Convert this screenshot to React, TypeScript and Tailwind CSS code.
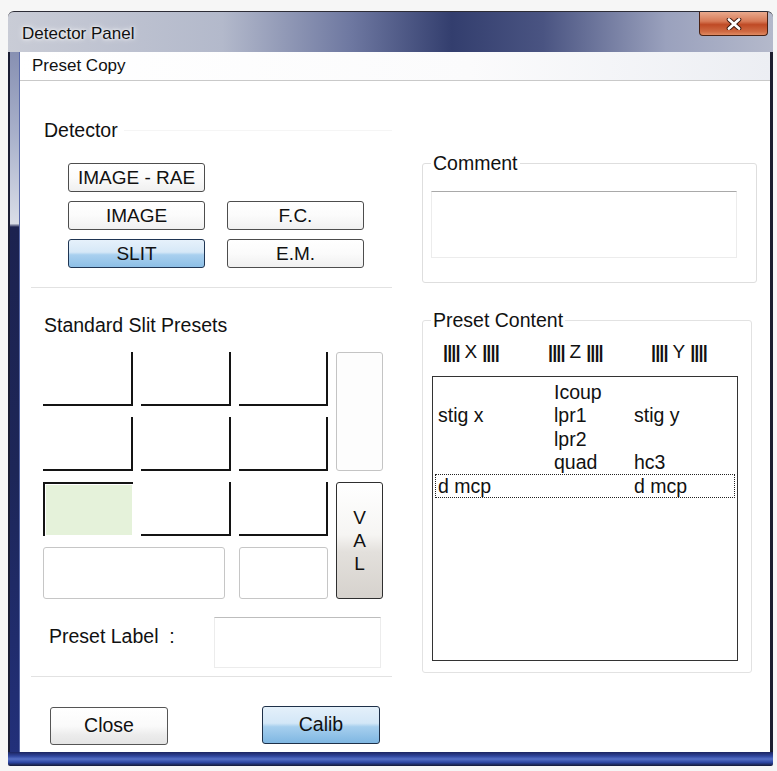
const sans = "font-['Liberation_Sans',Arial,sans-serif]";

const DetectorButton = ({ label, active = false }: { label: string; active?: boolean }) => (
  <button
    className={
      active
        ? 'h-[29px] w-[137px] rounded-[3px] border border-[#1f3553] bg-[linear-gradient(to_bottom,#e6f1fb_0%,#d6e8f7_45%,#a9d0ef_55%,#8dbfe6_100%)] text-[19px] leading-none'
        : 'h-[29px] w-[137px] rounded-[3px] border border-[#4d4d4d] bg-[linear-gradient(to_bottom,#ffffff_0%,#fbfbfb_50%,#f0f0f0_100%)] text-[19px] leading-none'
    }
  >
    {label}
  </button>
);

// slit cell: open on the top/left, dark edge on the right and bottom
const SlitCell = () => <div className="border-b-2 border-r-2 border-[#141414] bg-white" />;

const Bars = ({ letter }: { letter: string }) => (
  <span className="flex items-center gap-[5px]">
    <span className="text-[18px] font-bold leading-[20px] tracking-[-0.9px]">||||</span>
    <span className="text-[19px] leading-[20px]">{letter}</span>
    <span className="text-[18px] font-bold leading-[20px] tracking-[-0.9px]">||||</span>
  </span>
);

const rows = [
  ['', 'Icoup', ''],
  ['stig x', 'lpr1', 'stig y'],
  ['', 'lpr2', ''],
  ['', 'quad', 'hc3'],
  ['d mcp', '', 'd mcp'],
];

export default function App() {
  return (
    <div className={`h-[771px] w-[777px] overflow-hidden bg-[#f6f6f6] pl-[8px] pt-[11px] text-[#111] ${sans}`}>
      <div className="flex h-[755px] w-[765px] flex-col">
        {/* Title bar */}
        <div className="flex h-[41px] items-start justify-between rounded-t-[6px] border-t border-[#2c2c36] bg-[linear-gradient(to_right,#c9ccd6_0%,#b3b9cb_28%,#6d77a0_45%,#333e6e_58%,#4a5482_70%,#9aa1bd_86%,#b4b9cb_100%)]">
          <span className="pl-[14px] pt-[12px] text-[17px] leading-[20px] [text-shadow:0_0_6px_#ffffff,0_0_3px_#ffffff]">
            Detector Panel
          </span>
          <button className="mr-[5px] flex h-[24px] w-[69px] items-center justify-center rounded-b-[4px] border border-t-0 border-[#4a2214] bg-[linear-gradient(to_bottom,#e9a98d_0%,#d77a57_40%,#bf4a25_55%,#cf6a43_85%,#e08a62_100%)]">
            <svg width="16" height="12" viewBox="0 0 16 12">
              <path d="M3 1.5 L13 10.5 M13 1.5 L3 10.5" stroke="#3b160b" strokeWidth="4.6" strokeLinecap="round" />
              <path d="M3 1.5 L13 10.5 M13 1.5 L3 10.5" stroke="#ffffff" strokeWidth="2.8" strokeLinecap="round" />
            </svg>
          </button>
        </div>

        <div className="flex h-[700px]">
          {/* left frame */}
          <div className="w-[12px] border-l-[2px] border-r border-l-[#1a1d33] border-r-[#5a6aa8] bg-[linear-gradient(to_bottom,#8790b2_0%,#a9b1cb_12%,#d9dde7_24.5%,#1c2250_25%,#1d2658_60%,#22307a_100%)]" />

          {/* Content */}
          <div className="flex w-[750px] flex-col bg-white">
            <div className="flex h-[29px] items-center border-b border-[#c9c9c9] bg-[linear-gradient(to_right,#ffffff_0%,#fbfbfc_60%,#eceef3_100%)] pl-[12px] text-[17px]">
              Preset Copy
            </div>

            <div className="flex items-start">
              {/* Left column */}
              <div className="ml-[11px] flex w-[361px] flex-col">
                {/* Detector group */}
                <div className="mt-[39px] flex flex-col border-b border-[#e2e2e2] pb-[19px]">
                  <div className="flex h-[20px] items-center">
                    <span className="pl-[13px] pr-[6px] text-[19.5px] leading-[20px]">Detector</span>
                    <div className="h-px flex-1 bg-[#f5f5f5]" />
                  </div>
                  <div className="mt-[23px] grid grid-cols-[137px_137px] gap-x-[22px] gap-y-[9px] pl-[37px]">
                    <DetectorButton label="IMAGE - RAE" />
                    <div />
                    <DetectorButton label="IMAGE" />
                    <DetectorButton label="F.C." />
                    <DetectorButton label="SLIT" active />
                    <DetectorButton label="E.M." />
                  </div>
                </div>

                {/* Standard Slit Presets */}
                <div className="flex flex-col border-b border-[#e2e2e2] pb-[8px]">
                  <span className="mt-[27px] pl-[13px] text-[19.5px] leading-[20px]">Standard Slit Presets</span>
                  <div className="ml-[12px] mt-[17px] grid grid-cols-[90px_90px_89px_47px] grid-rows-[54px_54px_54px_52px] gap-x-[8px] gap-y-[11px]">
                    <SlitCell />
                    <SlitCell />
                    <SlitCell />
                    <div className="row-span-2 rounded-[3px] border border-[#c4c4c4] bg-[#fdfdfd]" />
                    <SlitCell />
                    <SlitCell />
                    <SlitCell />
                    <div className="border-l-2 border-t-2 border-[#141414] bg-white p-[1px]">
                      <div className="h-full w-full bg-[#e5f2da]" />
                    </div>
                    <SlitCell />
                    <SlitCell />
                    <button className="row-span-2 flex flex-col items-center justify-center rounded-[3px] border border-[#2f2f2f] bg-[linear-gradient(to_bottom,#ffffff_0%,#f6f5f3_45%,#e3e0dc_60%,#d6d2cd_100%)] text-[19px] leading-[23px]">
                      <span>V</span>
                      <span>A</span>
                      <span>L</span>
                    </button>
                    <div className="col-span-2 mr-[6px] rounded-[3px] border border-[#c6c6c6] bg-white" />
                    <div className="rounded-[3px] border border-[#c6c6c6] bg-white" />
                  </div>

                  <div className="mt-[18px] flex items-start pr-[11px]">
                    <span className="pl-[18px] pt-[9px] text-[19.5px] leading-[20px]">Preset Label&nbsp;&nbsp;:</span>
                    <div className="ml-auto h-[51px] w-[167px] border border-[#ececec] border-t-[#bdbdbd] bg-white" />
                  </div>
                </div>
              </div>

              {/* Right column */}
              <div className="ml-[30px] flex w-[335px] flex-col">
                <fieldset className="mt-[72px] rounded-[3px] border border-[#dedede] pb-[24px]">
                  <legend className="ml-[8px] px-[2px] text-[19.5px] leading-[20px]">Comment</legend>
                  <div className="ml-[8px] mt-[18px] h-[67px] w-[306px] border border-[#ececec] border-t-[#a9a9a9] bg-white" />
                </fieldset>

                <fieldset className="mt-[27px] w-[330px] rounded-[3px] border border-[#e2e2e2] pb-[11px]">
                  <legend className="ml-[8px] px-[2px] text-[19.5px] leading-[20px]">Preset Content</legend>
                  <div className="mt-[12px] grid h-[20px] grid-cols-[105px_103px_auto] items-center pl-[20px]">
                    <Bars letter="X" />
                    <Bars letter="Z" />
                    <Bars letter="Y" />
                  </div>
                  <div className="ml-[9px] mt-[14px] h-[285px] w-[306px] border border-[#333333] bg-white pt-[3px]">
                    {rows.map((r, i) => (
                      <div
                        key={i}
                        className={
                          i === 4
                            ? 'mx-[2px] grid h-[23.5px] grid-cols-[116px_80px_1fr] items-center border border-dotted border-[#222] px-[2px] text-[19.5px] leading-[20px]'
                            : 'mx-[2px] grid h-[23.5px] grid-cols-[116px_80px_1fr] items-center border border-transparent px-[2px] text-[19.5px] leading-[20px]'
                        }
                      >
                        <span>{r[0]}</span>
                        <span>{r[1]}</span>
                        <span>{r[2]}</span>
                      </div>
                    ))}
                  </div>
                </fieldset>
              </div>
            </div>

            {/* Bottom buttons */}
            <div className="mt-[30px] flex items-start gap-[94px] pl-[30px]">
              <button className="h-[38px] w-[118px] rounded-[3px] border border-[#555] bg-[linear-gradient(to_bottom,#ffffff_0%,#fafafa_50%,#ececec_75%,#e4e4e4_100%)] text-[19.5px]">
                Close
              </button>
              <button className="-mt-px h-[38px] w-[118px] rounded-[3px] border border-[#1e3048] bg-[linear-gradient(to_bottom,#e4f0fa_0%,#d3e7f7_45%,#a6cfee_55%,#7fb7e2_100%)] text-[19.5px]">
                Calib
              </button>
            </div>
          </div>

          {/* right frame */}
          <div className="w-[3px] bg-[#1c1f30]" />
        </div>

        {/* bottom frame */}
        <div className="h-[14px] rounded-b-[2px] bg-[linear-gradient(to_bottom,#1b2460_0%,#31479e_30%,#5670c6_50%,#2c44a0_75%,#141833_100%)]" />
      </div>
    </div>
  );
}
